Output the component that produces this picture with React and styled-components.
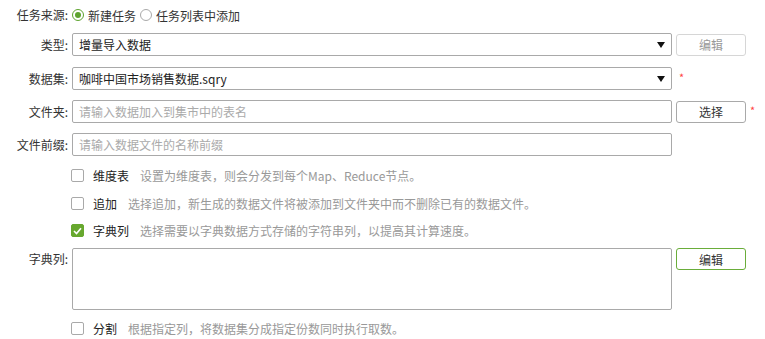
import React from "react";
import styled, { createGlobalStyle, css } from "styled-components";

const GlobalStyle = createGlobalStyle`
  html, body { margin: 0; padding: 0; background: #fff; }
  body {
    font-family: "Noto Sans CJK SC", "Noto Sans", sans-serif;
    font-size: 12px;
    color: #333;
  }
  * { box-sizing: border-box; }
`;

const Form = styled.div`
  display: flex;
  flex-direction: column;
  padding-top: 5px;
  width: 765px;
`;

const FieldRow = styled.div`
  display: grid;
  grid-template-columns: 68px 600px 70px auto;
  column-gap: 4px;
  align-items: ${(p) => (p.$top ? "start" : "center")};
  height: ${(p) => p.$h}px;
  margin-top: ${(p) => p.$mt || 0}px;
`;

const Label = styled.label`
  text-align: right;
  line-height: 18px;
  color: #333;
  white-space: nowrap;
  margin-top: ${(p) => (p.$top ? 2 : 0)}px;
`;

const RadioGroup = styled.div`
  grid-column: 2 / 5;
  display: flex;
  align-items: center;
`;

const RadioItem = styled.label`
  display: flex;
  align-items: center;
  gap: 4px;
  margin-right: 4px;
  color: #333;
`;

const RadioCircle = styled.span`
  width: 12px;
  height: 12px;
  border-radius: 50%;
  border: 1px solid ${(p) => (p.$on ? "#5da32f" : "#a9a9a9")};
  display: flex;
  align-items: center;
  justify-content: center;
  &::after {
    content: "";
    width: 6px;
    height: 6px;
    border-radius: 50%;
    background: ${(p) => (p.$on ? "#5da32f" : "transparent")};
  }
`;

const boxBase = css`
  height: 23px;
  border: 1px solid #a9a9a9;
  border-radius: 2px;
  background: #fff;
  font-family: inherit;
  font-size: 12px;
  padding: 0 6px;
`;

const SelectBox = styled.div`
  ${boxBase};
  display: flex;
  align-items: center;
  justify-content: space-between;
  color: #222;
  padding-right: 6px;
`;

const TextInput = styled.input`
  ${boxBase};
  width: 100%;
  outline: none;
  color: #222;
  &::placeholder { color: #aaa; }
`;

const TextArea = styled.textarea`
  ${boxBase};
  height: 62px;
  width: 100%;
  resize: none;
  outline: none;
  padding: 4px 6px;
`;

const Button = styled.button`
  width: 70px;
  height: 22px;
  background: #fff;
  border-radius: 3px;
  font-family: inherit;
  font-size: 12px;
  padding: 0;
  cursor: pointer;
  ${(p) =>
    p.$variant === "disabled"
      ? css`
          color: #999;
          border: 1px solid #d6d6d6;
        `
      : p.$variant === "primary"
      ? css`
          color: #333;
          border: 1px solid #6aad3a;
        `
      : css`
          color: #333;
          border: 1px solid #a9a9a9;
        `}
`;

const Required = styled.span`
  color: #f44;
  font-size: 11px;
  line-height: 11px;
  align-self: start;
  margin-top: 5px;
  padding-left: ${(p) => p.$pad || 0}px;
`;

const CheckRow = styled.div`
  grid-column: 2 / 5;
  display: flex;
  align-items: center;
  height: 100%;
`;

const CheckBox = styled.span`
  width: 13px;
  height: 13px;
  border-radius: 2px;
  border: 1px solid ${(p) => (p.$on ? "#67a82e" : "#a9a9a9")};
  background: ${(p) => (p.$on ? "#67a82e" : "#fff")};
  display: flex;
  align-items: center;
  justify-content: center;
  margin-left: -1px;
  margin-right: 9px;
`;

const CheckTitle = styled.span`
  color: #222;
  margin-right: 11px;
`;

const CheckDesc = styled.span`
  color: #999;
`;

const Arrow = () => (
  <svg width="8" height="6" viewBox="0 0 8 6">
    <path d="M0 0 L8 0 L4 6 Z" fill="#111" />
  </svg>
);

const Check = () => (
  <svg width="9" height="8" viewBox="0 0 9 8">
    <path d="M1 4 L3.5 6.5 L8 1.2" stroke="#fff" strokeWidth="1.6" fill="none" />
  </svg>
);

const Option = ({ checked, title, desc, mt }) => (
  <FieldRow $h={27} $mt={mt}>
    <span />
    <CheckRow>
      <CheckBox $on={checked}>{checked && <Check />}</CheckBox>
      <CheckTitle>{title}</CheckTitle>
      <CheckDesc>{desc}</CheckDesc>
    </CheckRow>
  </FieldRow>
);

export default function App() {
  return (
    <>
      <GlobalStyle />
      <Form>
        <FieldRow $h={20}>
          <Label>任务来源:</Label>
          <RadioGroup>
            <RadioItem>
              <RadioCircle $on />
              新建任务
            </RadioItem>
            <RadioItem>
              <RadioCircle />
              任务列表中添加
            </RadioItem>
          </RadioGroup>
        </FieldRow>

        <FieldRow $h={23} $mt={8}>
          <Label>类型:</Label>
          <SelectBox role="combobox">
            <span>增量导入数据</span>
            <Arrow />
          </SelectBox>
          <Button $variant="disabled">编辑</Button>
        </FieldRow>

        <FieldRow $h={23} $mt={11}>
          <Label>数据集:</Label>
          <SelectBox role="combobox">
            <span>咖啡中国市场销售数据.sqry</span>
            <Arrow />
          </SelectBox>
          <Required $pad={3}>*</Required>
        </FieldRow>

        <FieldRow $h={23} $mt={10}>
          <Label>文件夹:</Label>
          <TextInput placeholder="请输入数据加入到集市中的表名" />
          <Button>选择</Button>
          <Required>*</Required>
        </FieldRow>

        <FieldRow $h={23} $mt={10}>
          <Label>文件前缀:</Label>
          <TextInput placeholder="请输入数据文件的名称前缀" />
        </FieldRow>

        <Option
          mt={6}
          title="维度表"
          desc="设置为维度表，则会分发到每个Map、Reduce节点。"
        />
        <Option
          mt={1}
          title="追加"
          desc="选择追加，新生成的数据文件将被添加到文件夹中而不删除已有的数据文件。"
        />
        <Option
          checked
          title="字典列"
          desc="选择需要以字典数据方式存储的字符串列，以提高其计算速度。"
        />

        <FieldRow $h={62} $mt={4} $top>
          <Label $top>字典列:</Label>
          <TextArea />
          <Button $variant="primary">编辑</Button>
        </FieldRow>

        <Option
          mt={5}
          title="分割"
          desc="根据指定列，将数据集分成指定份数同时执行取数。"
        />
      </Form>
    </>
  );
}
